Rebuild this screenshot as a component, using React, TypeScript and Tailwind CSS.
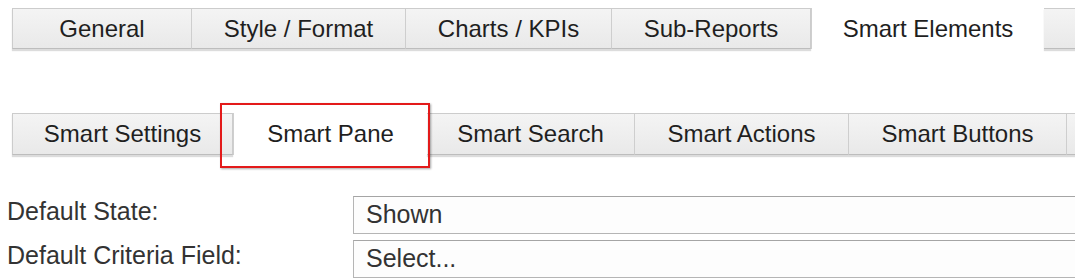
import React from 'react';

interface TabProps {
  label: string;
  width: string;
  active?: boolean;
}

const Tab: React.FC<TabProps> = ({ label, width, active }) => {
  if (active) {
    return (
      <div
        className={`${width} h-full shrink-0 flex items-center justify-center bg-white border-l border-[#cfcfcf] text-[#1f1f1f]`}
      >
        {label}
      </div>
    );
  }
  return (
    <div
      className={`${width} h-full shrink-0 flex items-center justify-center border border-l-0 first:border-l border-[#cccccc] border-b-[#bdbdbd] bg-gradient-to-b from-[#f4f4f4] to-[#e9e9e9] shadow-[0_2px_1px_#dcdcdc] text-[#1f1f1f]`}
    >
      {label}
    </div>
  );
};

const mainTabs = [
  { label: 'General', width: 'w-[180px]' },
  { label: 'Style / Format', width: 'w-[214px]' },
  { label: 'Charts / KPIs', width: 'w-[206px]' },
  { label: 'Sub-Reports', width: 'w-[199px]' },
  { label: 'Smart Elements', width: 'w-[233px]', active: true },
  { label: '', width: 'w-[120px]' },
];

const smartTabs = [
  { label: 'Smart Settings', width: 'w-[221px]' },
  { label: 'Smart Pane', width: 'w-[194px]', active: true },
  { label: 'Smart Search', width: 'w-[208px]' },
  { label: 'Smart Actions', width: 'w-[214px]' },
  { label: 'Smart Buttons', width: 'w-[218px]' },
  { label: '', width: 'w-[120px]' },
];

export default function App() {
  return (
    <div className="w-[1075px] h-[278px] overflow-hidden bg-white font-['Liberation_Sans',Arial,sans-serif] text-[24px]">
      {/* Main tabs */}
      <div className="pt-2 pl-3 h-[49px] flex">
        {mainTabs.map((t) => (
          <Tab key={t.label + t.width} label={t.label} width={t.width} active={t.active} />
        ))}
      </div>

      {/* Smart element tabs */}
      <div className="mt-[64px] pl-3 h-[42px] flex">
        {smartTabs.map((t) =>
          t.active ? (
            <div key={t.label} className="relative h-full shrink-0">
              <Tab label={t.label} width={t.width} active />
              <div className="absolute -left-[13px] -top-[10px] w-[210px] h-[65px] border-2 border-[#e31a1a] shadow-[1px_1px_2px_rgba(0,0,0,0.35)]" />
            </div>
          ) : (
            <Tab key={t.label + t.width} label={t.label} width={t.width} />
          )
        )}
      </div>

      {/* Form */}
      <div className="mt-[41px] flex flex-col gap-[6px] text-[25px] text-[#333333]">
        <div className="flex items-center h-[38px]">
          <div className="w-[353px] pl-[7px] shrink-0 -mt-[6px]">Default State:</div>
          <div className="flex-1 h-full flex items-center pl-3 border border-[#b5b5b5] border-t-[#a5a5a5] border-r-0 bg-[#fdfdfd]">
            Shown
          </div>
        </div>
        <div className="flex items-center h-[38px]">
          <div className="w-[353px] pl-[7px] shrink-0 -mt-[6px]">Default Criteria Field:</div>
          <div className="flex-1 h-full flex items-center pl-3 border border-[#b5b5b5] border-t-[#a5a5a5] border-r-0 bg-[#fdfdfd]">
            Select...
          </div>
        </div>
      </div>
    </div>
  );
}
